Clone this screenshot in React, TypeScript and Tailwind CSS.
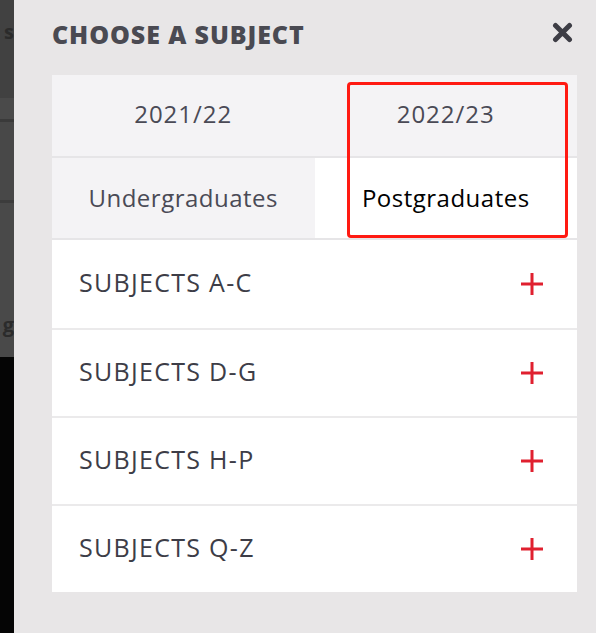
const subjects = ['SUBJECTS A-C', 'SUBJECTS D-G', 'SUBJECTS H-P', 'SUBJECTS Q-Z']

function Plus() {
  return (
    <svg width="24" height="24" viewBox="0 0 24 24" className="shrink-0">
      <path d="M12 1v22M1 12h22" stroke="#e0202f" strokeWidth="3" />
    </svg>
  )
}

function Close() {
  return (
    <svg width="21" height="21" viewBox="0 0 21 21" className="shrink-0 -mt-[5px]">
      <path d="M3.5 3.5l14 14M17.5 3.5l-14 14" stroke="#3d3d45" strokeWidth="5" strokeLinecap="round" />
    </svg>
  )
}

export default function App() {
  return (
    <div
      className="relative w-[596px] h-[633px] flex overflow-hidden bg-[#e8e6e7]"
      style={{ fontFamily: '"Open Sans", "Noto Sans", sans-serif' }}
    >
      {/* page behind the modal */}
      <div className="w-[14px] shrink-0 flex flex-col overflow-hidden text-[#2b2b2b] text-[20px] font-bold">
        <div className="h-[98px] bg-[#414141] flex items-start justify-end pt-[22px] leading-none">
          <span>s</span>
        </div>
        <div className="h-[24px] bg-[#4a4a4a] border-b-[3px] border-[#3a3a3a]" />
        <div className="h-[81px] bg-[#484848] border-b-[3px] border-[#3c3c3c]" />
        <div className="h-[154px] bg-[#494949] flex items-end justify-end pb-[22px] leading-none">
          <span>g</span>
        </div>
        <div className="flex-1 bg-[#050505]" />
      </div>

      {/* modal */}
      <div className="flex-1 flex flex-col pl-[38px] pr-[19px]">
        <div className="h-[75px] flex items-center justify-between pr-[4px] pb-[6px]">
          <h2 className="text-[25px] font-extrabold text-[#4a4a52] tracking-[0.9px]">CHOOSE A SUBJECT</h2>
          <Close />
        </div>

        <div className="bg-white flex flex-col">
          <div className="h-[83px] grid grid-cols-2 bg-[#f4f3f5] border-b-2 border-[#e6e5e7] text-[24px] tracking-[1px] text-[#4a4a55]">
            <div className="flex items-center justify-center pb-[3px]">2021/22</div>
            <div className="flex items-center justify-center pb-[3px]">2022/23</div>
          </div>
          <div className="h-[82px] grid grid-cols-2 border-b-2 border-[#e6e5e7] text-[24px] tracking-[0.5px]">
            <div className="flex items-center justify-center bg-[#f4f3f5] text-[#4a4a55]">Undergraduates</div>
            <div className="flex items-center justify-center text-black">Postgraduates</div>
          </div>
          {subjects.map((s, i) => (
            <div
              key={s}
              className={`h-[88px] flex items-center justify-between pl-[27px] pr-[33px] text-[25px] tracking-[1.3px] text-[#3d3d47] ${
                i > 0 ? 'border-t-2 border-[#ebeaeb]' : ''
              }`}
            >
              <span className="-mt-[2px]">{s}</span>
              <Plus />
            </div>
          ))}
        </div>
      </div>

      {/* annotation box */}
      <div className="absolute left-[347px] top-[82px] w-[221px] h-[156px] border-[3px] border-[#ff1a12] rounded-[4px]" />
    </div>
  )
}
